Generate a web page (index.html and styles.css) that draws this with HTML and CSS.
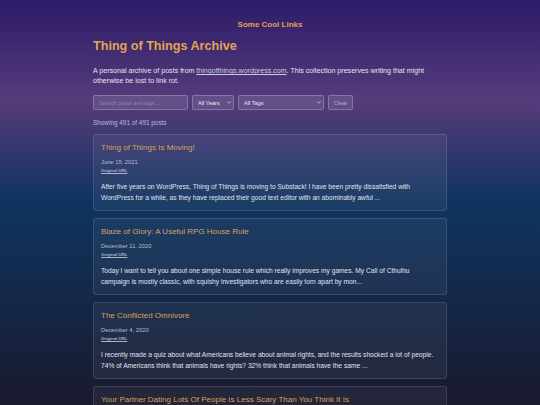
FILE: index.html
```html
<!DOCTYPE html>
<html lang="en">
<head>
<meta charset="utf-8">
<title>Thing of Things Archive</title>
<link rel="stylesheet" href="styles.css">
</head>
<body>
<div class="page">
  <nav class="topnav"><a href="#" class="toplink">Some Cool Links</a></nav>
  <main class="container">
    <h1 class="title">Thing of Things Archive</h1>
    <p class="intro">A personal archive of posts from <a href="#" class="intro-link">thingofthings.wordpress.com</a>. This collection preserves writing that might otherwise be lost to link rot.</p>
    <div class="controls">
      <input class="search" type="text" placeholder="Search posts and tags...">
      <span class="select-wrap select-years">
        <select class="select"><option>All Years</option></select>
        <svg class="chev" viewBox="0 0 10 6" aria-hidden="true"><path d="M1.5 1.2 L5 4.6 L8.5 1.2" fill="none" stroke="#e6e6f0" stroke-width="1.6" stroke-linecap="round" stroke-linejoin="round"/></svg>
      </span>
      <span class="select-wrap select-tags">
        <select class="select"><option>All Tags</option></select>
        <svg class="chev" viewBox="0 0 10 6" aria-hidden="true"><path d="M1.5 1.2 L5 4.6 L8.5 1.2" fill="none" stroke="#e6e6f0" stroke-width="1.6" stroke-linecap="round" stroke-linejoin="round"/></svg>
      </span>
      <button class="clear">Clear</button>
    </div>
    <p class="count">Showing 491 of 491 posts</p>
    <div class="posts">
      <article class="card">
        <h2 class="card-title">Thing of Things Is Moving!</h2>
        <div class="card-date">June 15, 2021</div>
        <a href="#" class="card-url">Original URL</a>
        <p class="card-excerpt">After five years on WordPress, Thing of Things is moving to Substack! I have been pretty dissatisfied with WordPress for a while, as they have replaced their good text editor with an abominably awful ...</p>
      </article>
      <article class="card">
        <h2 class="card-title">Blaze of Glory: A Useful RPG House Rule</h2>
        <div class="card-date">December 11, 2020</div>
        <a href="#" class="card-url">Original URL</a>
        <p class="card-excerpt">Today I want to tell you about one simple house rule which really improves my games. My Call of Cthulhu campaign is mostly classic, with squishy investigators who are easily torn apart by mon...</p>
      </article>
      <article class="card">
        <h2 class="card-title">The Conflicted Omnivore</h2>
        <div class="card-date">December 4, 2020</div>
        <a href="#" class="card-url">Original URL</a>
        <p class="card-excerpt">I recently made a quiz about what Americans believe about animal rights, and the results shocked a lot of people. 74% of Americans think that animals have rights? 32% think that animals have the same ...</p>
      </article>
      <article class="card">
        <h2 class="card-title">Your Partner Dating Lots Of People Is Less Scary Than You Think It Is</h2>
      </article>
    </div>
  </main>
</div>
</body>
</html>
```

FILE: styles.css
```css
* { box-sizing: border-box; }
html, body {
  margin: 0;
  padding: 0;
  height: 100%;
}
body {
  font-family: "Liberation Sans", Arial, Helvetica, sans-serif;
  color: #e2e2ee;
  background: linear-gradient(180deg, #2d1b69 0%, #553c7b 25%, #0f3460 50%, #1a1a2e 100%);
  background-attachment: fixed;
  overflow: hidden;
}
.page {
  min-height: 100%;
}
.topnav {
  display: flex;
  justify-content: center;
  padding-top: 20px;
  height: 38px;
}
.toplink {
  color: #e0a24e;
  font-weight: bold;
  font-size: 8px;
  line-height: 10px;
  text-decoration: none;
}
.container {
  width: 354px;
  margin: 0 auto;
}
.title {
  margin: 0;
  font-size: 12.6px;
  line-height: 16px;
  color: #e2a552;
  font-weight: bold;
}
.intro {
  margin: 12px 0 0;
  font-size: 7.1px;
  line-height: 10px;
  color: #e6e4f0;
}
.intro-link {
  color: #c9cde0;
  text-decoration: underline;
}
.controls {
  display: flex;
  align-items: flex-start;
  gap: 4px;
  margin-top: 9px;
  height: 15px;
}
.search, .select, .clear {
  font-family: inherit;
  font-size: 5.6px;
  height: 15px;
  border: 1px solid rgba(255,255,255,0.22);
  border-radius: 2px;
  background: rgba(255,255,255,0.1);
  color: #e6e6f0;
  padding: 0 5px;
  margin: 0;
  outline: none;
}
.search {
  width: 95px;
}
.search::placeholder {
  color: rgba(255,255,255,0.3);
}
.select-wrap {
  position: relative;
  display: block;
  height: 15px;
}
.select {
  -webkit-appearance: none;
  appearance: none;
  display: block;
  width: 100%;
  padding-right: 10px;
}
.chev {
  position: absolute;
  right: 3px;
  top: 6px;
  width: 4px;
  height: 3px;
  pointer-events: none;
}
.select-years { width: 42px; }
.select-tags { width: 86px; }
.clear {
  width: 25px;
  padding: 0;
  color: rgba(255,255,255,0.5);
}
.count {
  margin: 8px 0 0;
  font-size: 6.4px;
  line-height: 10px;
  color: #b9bad0;
}
.posts {
  display: flex;
  flex-direction: column;
  gap: 7px;
  margin-top: 6px;
}
.card {
  height: 77px;
  flex-shrink: 0;
  border: 1px solid rgba(255,255,255,0.12);
  border-radius: 3px;
  background: rgba(255,255,255,0.05);
  padding: 7px 7px 0 7px;
  overflow: hidden;
}
.card-title {
  margin: 0;
  font-weight: normal;
  font-size: 8px;
  line-height: 11px;
  color: #d6a25c;
}
.card-date {
  margin-top: 5px;
  font-size: 5.8px;
  line-height: 8px;
  color: #b7bcd0;
}
.card-url {
  display: block;
  margin-top: 2px;
  font-size: 4.3px;
  line-height: 6px;
  font-weight: bold;
  color: #a9b3cc;
  text-decoration: underline;
}
.card-excerpt {
  margin: 7px 0 0;
  font-size: 6.65px;
  line-height: 11px;
  color: #e2e2ee;
}
```
